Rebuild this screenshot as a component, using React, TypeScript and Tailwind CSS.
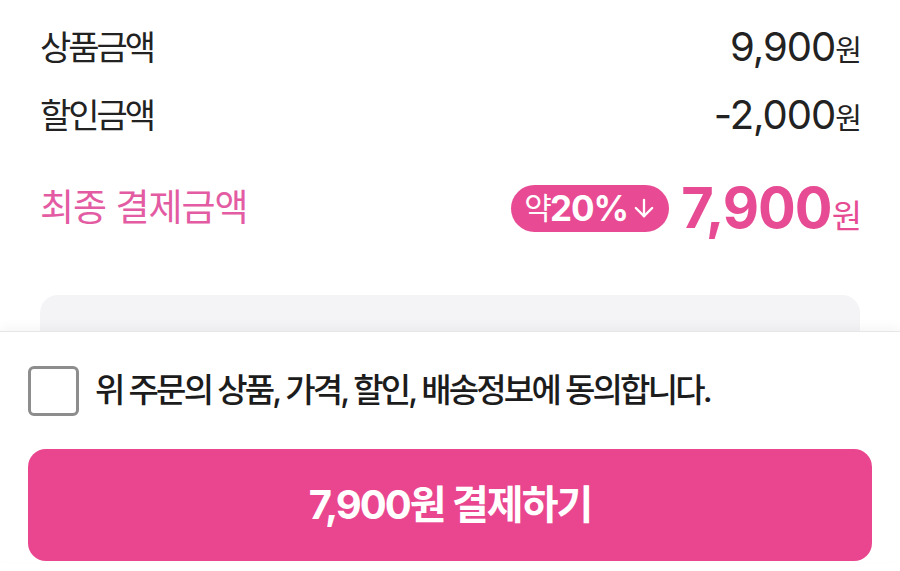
import { ArrowDown } from "lucide-react";

const font = { fontFamily: "Inter, 'Noto Sans CJK KR', sans-serif" };

function PriceRow({ label, value }: { label: string; value: string }) {
  return (
    <div className="flex h-[68px] items-center justify-between">
      <span className="text-[34px] tracking-[-3px] text-[#222]">{label}</span>
      <span className="flex items-baseline text-[#222]">
        <span className="text-[40px] tracking-[-1px]">{value}</span>
        <span className="text-[29px] tracking-[-2px]">원</span>
      </span>
    </div>
  );
}

export default function App() {
  return (
    <div className="h-[571px] w-[900px] overflow-hidden bg-white" style={font}>
      {/* 주문 금액 요약 */}
      <div className="h-[331px] overflow-hidden px-[40px] pt-[13px]">
        <PriceRow label="상품금액" value="9,900" />
        <PriceRow label="할인금액" value="-2,000" />

        <div className="mt-[24px] flex h-[70px] items-center justify-between">
          <span className="text-[37px] tracking-[-1px] text-[#e35ba2]">
            최종 결제금액
          </span>
          <div className="flex items-center gap-[12px]">
            <span className="flex h-[47px] items-center rounded-full bg-[#e84a93] pl-[13px] pr-[11px] text-white">
              <span className="text-[30px] tracking-[-2px]">약</span>
              <span className="text-[35px] font-bold tracking-[-1px]">20%</span>
              <ArrowDown size={28} strokeWidth={2} className="ml-[2px]" />
            </span>
            <span className="flex items-baseline text-[#e64b93]">
              <span className="text-[56px] font-bold tracking-[-1px]">7,900</span>
              <span className="text-[33px] tracking-[-2px]">원</span>
            </span>
          </div>
        </div>

        <div className="mt-[52px] h-[80px] rounded-t-[18px] bg-[#f4f4f7]" />
      </div>

      {/* 하단 결제 영역 */}
      <div className="relative border-t border-[#e6e6e9] bg-white px-[28px] pt-[34px] shadow-[0_-4px_10px_rgba(0,0,0,0.04)]">
        <label className="flex items-center gap-[16px]">
          <span className="h-[50px] w-[51px] rounded-[6px] border-[3px] border-[#8d8d8d] bg-white" />
          <span className="text-[33px] font-medium tracking-[-2.8px] text-[#1c1c1c]">
            위 주문의 상품, 가격, 할인, 배송정보에 동의합니다.
          </span>
        </label>

        <button
          type="button"
          className="mt-[33px] flex h-[112px] w-full items-center justify-center rounded-[18px] bg-[#e9468f] text-white"
        >
          <span className="text-[40px] font-bold tracking-[-2px]">7,900원 결제하기</span>
        </button>
      </div>
    </div>
  );
}
